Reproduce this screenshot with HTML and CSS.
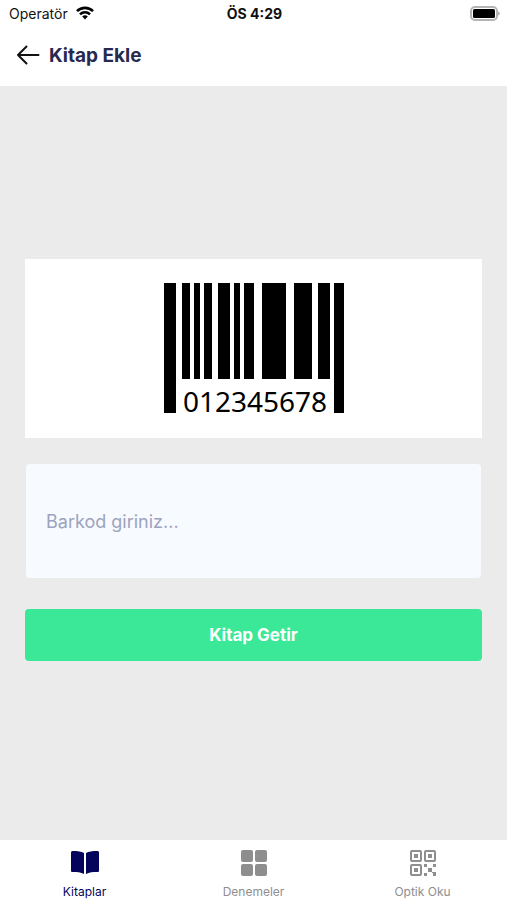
FILE: index.html
```html
<!DOCTYPE html>
<html lang="tr">
<head>
    <meta charset="UTF-8">
    <meta name="viewport" content="width=device-width, initial-scale=1.0">
    <title>Kitap Ekle</title>
    <link rel="stylesheet" href="styles.css">
</head>
<body>
    <div class="status-bar">
        <div class="status-left">
            <span>Operatör</span>
            <svg class="wifi-icon" viewBox="0 0 18 14" width="18" height="14" fill="none" stroke="#000" stroke-width="2.6">
                <path d="M1 5.2C5.500 .7 12.500 .7 17 5.200"/>
                <path d="M4 8.300C6.800 5.500 11.200 5.500 14 8.300"/>
                <path d="M6.200 10.400C7.800 8.900 10.200 8.900 11.800 10.400L9 13.400Z" fill="#000" stroke="none"/>
            </svg>
        </div>
        <span class="status-time">ÖS 4:29</span>
        <div class="status-right">
            <svg viewBox="0 0 31 15" width="31" height="15">
                <rect x="2" y="1" width="26" height="13" rx="4" fill="#fff" stroke="#b5b5b5" stroke-width="2"/>
                <rect x="4" y="3" width="22" height="9" rx="1.500" fill="#000"/>
                <path d="M29 5.500C31.500 6 31.500 9 29 9.500Z" fill="#b5b5b5"/>
            </svg>
        </div>
    </div>

    <header class="header">
        <button type="button" class="back-button" aria-label="Geri">
            <svg viewBox="0 0 24 20" width="24" height="20" fill="none" stroke="#111" stroke-width="2" stroke-linecap="round" stroke-linejoin="round">
                <path d="M22.500 10H2M10.500 1.500L2 10L10.500 18.500"/>
            </svg>
        </button>
        <h1>Kitap Ekle</h1>
    </header>

    <main class="content">
        <div class="barcode-card">
            <svg class="barcode" viewBox="0 0 180 136" width="180" height="136" role="img" aria-label="Barkod">
                <path d="M0 0h12v130H0zM18 0h8v96h-8zM30 0h6v96h-6zM40 0h8v96h-8zM54 0h12v96H54zM70 0h6v96h-6zM80 0h10v96H80zM98 0h24v96H98zM130 0h18v96h-18zM154 0h12v96h-12zM170 0h10v130h-10z"/>
                <text x="91" y="129" text-anchor="middle" class="barcode-number">012345678</text>
            </svg>
        </div>
        <form class="barcode-form">
            <input type="text" id="barcode" name="barcode" class="barcode-input" placeholder="Barkod giriniz..." aria-label="Barkod">
            <button type="submit" class="submit-button">Kitap Getir</button>
        </form>
    </main>

    <nav class="tab-bar">
        <a href="#kitaplar" class="tab active">
            <svg viewBox="0 0 30 28" width="30" height="28" fill="currentColor">
                <path d="M1 4.500C1 3.500 1.800 3 2.800 3C7.500 3 11.500 3.400 14 5V26C11 24.300 7 24 2.500 24C1.500 24 1 23.500 1 22.500Z"/>
                <path d="M29 4.500C29 3.500 28.200 3 27.200 3C22.500 3 18.500 3.400 16 5V26C19 24.300 23 24 27.500 24C28.500 24 29 23.500 29 22.500Z"/>
            </svg>
            <span>Kitaplar</span>
        </a>
        <a href="#denemeler" class="tab">
            <svg viewBox="0 0 30 28" width="30" height="28" fill="currentColor">
                <rect x="2" y="2" width="12" height="12" rx="2"/>
                <rect x="16" y="2" width="12" height="12" rx="2"/>
                <rect x="2" y="16" width="12" height="12" rx="2"/>
                <rect x="16" y="16" width="12" height="12" rx="2"/>
            </svg>
            <span>Denemeler</span>
        </a>
        <a href="#optik" class="tab">
            <svg viewBox="0 0 30 28" width="30" height="28" fill="currentColor">
                <g fill="none" stroke="currentColor" stroke-width="2">
                    <rect x="3" y="3" width="10" height="10" rx="1"/>
                    <rect x="17" y="3" width="10" height="10" rx="1"/>
                    <rect x="3" y="17" width="10" height="10" rx="1"/>
                </g>
                <path d="M6 6h4v4H6zM20 6h4v4h-4zM6 20h4v4H6zM20 20h4v4h-4zM16 16h3v3h-3zM25 16h3v3h-3zM16 25h3v3h-3zM24 24h4v4h-3v-3h-1z"/>
            </svg>
            <span>Optik Oku</span>
        </a>
    </nav>
</body>
</html>
```
FILE: styles.css
```css
* {
    box-sizing: border-box;
}
body {
    margin: 0;
    min-height: 100vh;
    display: flex;
    flex-direction: column;
    font-family: Inter, sans-serif;
    background-color: #fff;
}
.status-bar {
    display: grid;
    grid-template-columns: 1fr auto 1fr;
    align-items: center;
    height: 26px;
    padding: 0 7px 0 9px;
    font-size: 14px;
    color: #111;
}
.status-left {
    display: flex;
    align-items: center;
    gap: 8px;
}
.status-time {
    font-weight: 700;
}
.status-right {
    display: flex;
    justify-content: flex-end;
}
.header {
    display: flex;
    align-items: center;
    gap: 9px;
    height: 60px;
    padding: 0 16px 2px;
}
.back-button {
    display: flex;
    padding: 0;
    border: none;
    background: none;
    cursor: pointer;
}
.header h1 {
    margin: 0;
    font-size: 19px;
    font-weight: 700;
    color: #27294f;
}
.content {
    flex: 1;
    display: flex;
    flex-direction: column;
    justify-content: center;
    gap: 26px;
    padding: 0 25px 6px;
    background-color: #ebebeb;
}
.barcode-card {
    display: flex;
    justify-content: center;
    padding: 24px 0 19px;
    background-color: #fff;
}
.barcode {
    overflow: visible;
}
.barcode-number {
    font-family: "Noto Sans", sans-serif;
    font-size: 28px;
}
.barcode-form {
    display: flex;
    flex-direction: column;
    gap: 31px;
}
.barcode-input {
    height: 114px;
    margin: 0 1px;
    padding: 0 20px;
    border: none;
    border-radius: 4px;
    background-color: #f7faff;
    font-family: inherit;
    font-size: 18px;
    color: #27294f;
}
.barcode-input::placeholder {
    color: #9ca3bd;
    opacity: 1;
}
.submit-button {
    height: 52px;
    border: none;
    border-radius: 4px;
    background-color: #3ae898;
    font-family: inherit;
    font-size: 17px;
    font-weight: 700;
    color: #fff;
    cursor: pointer;
}
.tab-bar {
    display: flex;
    height: 60px;
    padding-top: 8px;
}
.tab {
    flex: 1;
    display: flex;
    flex-direction: column;
    align-items: center;
    gap: 8px;
    font-size: 12px;
    line-height: 16px;
    color: #8e8e8f;
    text-decoration: none;
}
.tab.active {
    color: #04045c;
}
```
